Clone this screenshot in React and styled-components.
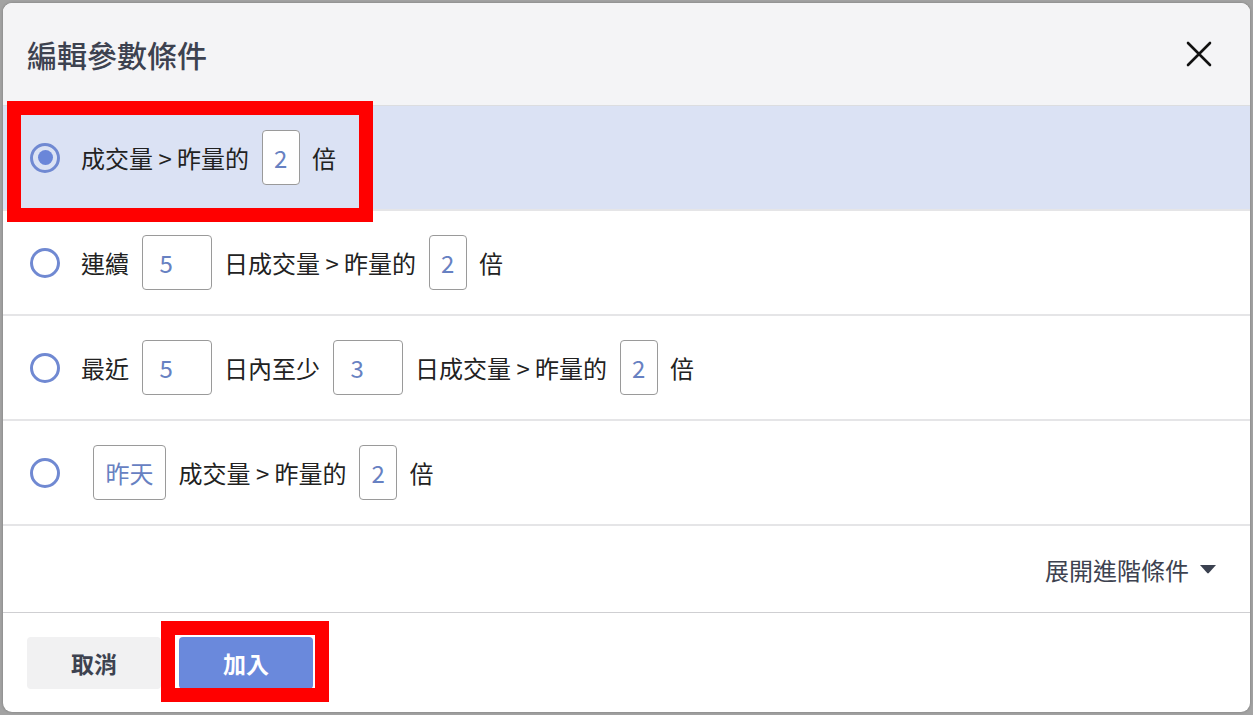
import styled, { createGlobalStyle } from "styled-components";

const GlobalStyle = createGlobalStyle`
  html, body {
    margin: 0;
    padding: 0;
    background: #a3a3a3;
  }
  * {
    box-sizing: border-box;
  }
  body {
    font-family: "Noto Sans CJK TC", "Noto Sans", sans-serif;
  }
`;

const conditions = [
  {
    id: 1,
    selected: true,
    parts: [{ t: "成交量 > 昨量的" }, { v: "2", w: 38 }, { t: "倍" }],
  },
  {
    id: 2,
    parts: [
      { t: "連續" },
      { v: "5", w: 70 },
      { t: "日成交量 > 昨量的" },
      { v: "2", w: 38 },
      { t: "倍" },
    ],
  },
  {
    id: 3,
    parts: [
      { t: "最近" },
      { v: "5", w: 70 },
      { t: "日內至少" },
      { v: "3", w: 70 },
      { t: "日成交量 > 昨量的" },
      { v: "2", w: 38 },
      { t: "倍" },
    ],
  },
  {
    id: 4,
    indent: true,
    parts: [
      { v: "昨天", w: 73, center: true },
      { t: "成交量 > 昨量的" },
      { v: "2", w: 38 },
      { t: "倍" },
    ],
  },
];

function App() {
  return (
    <Page>
      <GlobalStyle />
      <Modal>
        <Header>
          <Title>編輯參數條件</Title>
          <CloseButton aria-label="close">
            <svg width="26" height="26" viewBox="0 0 26 26">
              <path
                d="M2 2 L24 24 M24 2 L2 24"
                stroke="#111"
                strokeWidth="2.6"
                strokeLinecap="round"
              />
            </svg>
          </CloseButton>
        </Header>

        {conditions.map((c) => (
          <Row key={c.id} $selected={c.selected}>
            <Radio $checked={c.selected} />
            <Parts $indent={c.indent}>
              {c.parts.map((p, i) =>
                p.t ? (
                  <Label key={i}>{p.t}</Label>
                ) : (
                  <ValueBox key={i} $w={p.w} $center={p.center}>
                    {p.v}
                  </ValueBox>
                )
              )}
            </Parts>
          </Row>
        ))}

        <AdvancedRow>
          <AdvancedToggle>
            展開進階條件
            <svg width="18" height="10" viewBox="0 0 18 10">
              <path d="M1 1 H17 L9.8 9 Q9 9.8 8.2 9 Z" fill="#3b4150" />
            </svg>
          </AdvancedToggle>
        </AdvancedRow>

        <Footer>
          <CancelButton>取消</CancelButton>
          <AddButton>加入</AddButton>
        </Footer>
      </Modal>

      <Highlight $x={7} $y={101} $w={366} $h={121} />
      <Highlight $x={161} $y={621} $w={168} $h={81} />
    </Page>
  );
}

export default App;

const Page = styled.div`
  position: relative;
  width: 1253px;
  height: 715px;
  padding: 3px 3px 3px 3px;
  overflow: hidden;
`;

const Modal = styled.div`
  width: 1247px;
  height: 709px;
  background: #fff;
  border-radius: 9px;
  overflow: hidden;
  display: flex;
  flex-direction: column;
  box-shadow: 0 0 3px rgba(0, 0, 0, 0.25);
`;

const Header = styled.div`
  height: 103px;
  flex-shrink: 0;
  display: flex;
  align-items: center;
  justify-content: space-between;
  padding: 0 38px 0 24px;
  background: #f4f4f6;
  border-bottom: 1px solid #dcdde0;
`;

const Title = styled.h2`
  margin: 0;
  font-size: 30px;
  font-weight: 500;
  color: #3d4250;
  line-height: 1;
`;

const CloseButton = styled.button`
  border: 0;
  background: transparent;
  padding: 0;
  display: flex;
  cursor: pointer;
`;

const Row = styled.div`
  height: 105px;
  flex-shrink: 0;
  display: flex;
  align-items: center;
  padding: 0 0 0 27px;
  background: ${(p) => (p.$selected ? "#dbe2f4" : "#fff")};
  border-bottom: 2px solid #e5e5e7;
`;

const Radio = styled.span`
  position: relative;
  width: 30px;
  height: 30px;
  flex-shrink: 0;
  border-radius: 50%;
  border: 3px solid #7089d2;
  background: ${(p) => (p.$checked ? "transparent" : "#fff")};

  &::after {
    content: "";
    display: ${(p) => (p.$checked ? "block" : "none")};
    position: absolute;
    left: 4.5px;
    top: 4.5px;
    width: 15px;
    height: 15px;
    border-radius: 50%;
    background: #6a86d9;
  }
`;

const Parts = styled.div`
  display: flex;
  align-items: center;
  gap: 12.5px;
  margin-left: ${(p) => (p.$indent ? "33px" : "21px")};
`;

const Label = styled.span`
  font-size: 24px;
  color: #222;
  white-space: nowrap;
  line-height: 1;
`;

const ValueBox = styled.span`
  width: ${(p) => p.$w}px;
  height: 55px;
  display: flex;
  align-items: center;
  justify-content: ${(p) => (p.$center || p.$w < 50 ? "center" : "flex-start")};
  padding-left: ${(p) => (p.$center || p.$w < 50 ? "0" : "17px")};
  border: 1px solid #9a9a9a;
  border-radius: 4px;
  background: #fff;
  color: #6781c2;
  font-size: 24px;
`;

const AdvancedRow = styled.div`
  height: 87px;
  flex-shrink: 0;
  display: flex;
  align-items: center;
  justify-content: flex-end;
  padding: 0 33px 0 0;
  border-bottom: 1px solid #cfcfd2;
`;

const AdvancedToggle = styled.button`
  border: 0;
  background: transparent;
  padding: 0;
  display: flex;
  align-items: center;
  gap: 10px;
  font-family: inherit;
  font-size: 24px;
  color: #3d4250;
  cursor: pointer;
`;

const Footer = styled.div`
  flex: 1;
  display: flex;
  align-items: center;
  gap: 18px;
  padding: 0 24px;
`;

const BaseButton = styled.button`
  width: 134px;
  height: 52px;
  border: 0;
  border-radius: 4px;
  font-family: inherit;
  font-size: 23px;
  font-weight: 700;
  cursor: pointer;
`;

const CancelButton = styled(BaseButton)`
  background: #f1f1f2;
  color: #3d4250;
`;

const AddButton = styled(BaseButton)`
  background: #6a89dc;
  color: #fff;
`;

const Highlight = styled.div`
  position: absolute;
  left: ${(p) => p.$x}px;
  top: ${(p) => p.$y}px;
  width: ${(p) => p.$w}px;
  height: ${(p) => p.$h}px;
  border: 14px solid #ff0000;
  pointer-events: none;
`;
